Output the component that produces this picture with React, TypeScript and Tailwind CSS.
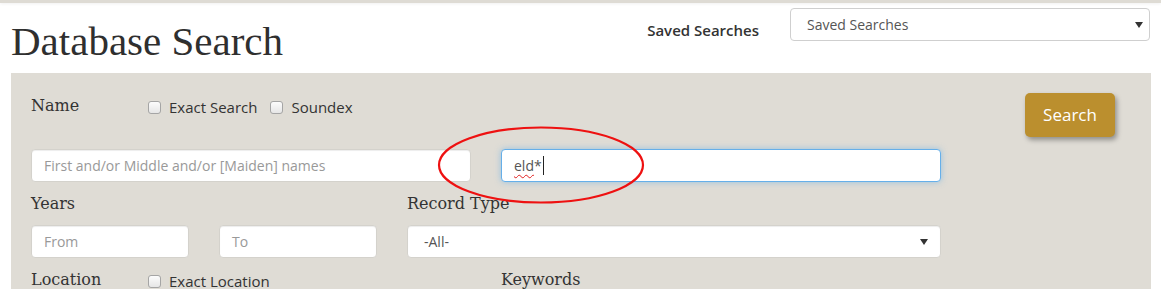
import type { ReactNode } from "react";

const sans = "font-['Open_Sans',sans-serif]";
const slab = "font-['DejaVu_Serif',serif]";

function Caret() {
  return (
    <svg width="8" height="6" viewBox="0 0 8 6" className="shrink-0" aria-hidden="true">
      <path d="M0 0h8L4 6z" fill="#333" />
    </svg>
  );
}

function Box({ label }: { label: string }) {
  return (
    <label className="flex items-center gap-[8px]">
      <span className="h-[13px] w-[13px] rounded-[3px] border border-[#a5a5a5] bg-gradient-to-b from-[#fcfcfc] to-[#e6e6e6]" />
      <span className={`${sans} text-[15px] text-[#333]`}>{label}</span>
    </label>
  );
}

function Field({ w, children, focus }: { w: string; children: ReactNode; focus?: boolean }) {
  return (
    <div
      className={`${w} flex h-[33px] items-center rounded-[4px] border bg-white px-[12px] ${sans} text-[14px] ${
        focus
          ? "border-[#66afe9] shadow-[0_0_6px_rgba(102,175,233,0.6)]"
          : "border-[#d4d2cc] shadow-[inset_0_1px_1px_rgba(0,0,0,0.075)]"
      }`}
    >
      {children}
    </div>
  );
}

function Label({ w, children }: { w?: string; children: ReactNode }) {
  return <div className={`${w ?? ""} ${slab} text-[16px] text-[#333]`}>{children}</div>;
}

export default function App() {
  return (
    <div className="relative h-[289px] w-[1161px] overflow-hidden bg-white">
      <div className="h-[3px] bg-[#dedbd4] shadow-[0_1px_3px_rgba(0,0,0,0.06)]" />

      <div className="flex h-[70px] items-start pl-[11px]">
        <h1 className="mt-[18px] font-['Liberation_Serif',serif] text-[41px] leading-[41px] text-[#2f2f2f]">
          Database Search
        </h1>
        <div className="ml-auto mr-[11px] mt-[5px] flex items-start gap-[31px]">
          <span className={`${sans} mt-[11px] text-[15px] font-semibold text-[#333]`}>Saved Searches</span>
          <div className={`flex h-[33px] w-[360px] items-center justify-between rounded-[4px] border border-[#cfcfcf] bg-white pl-[16px] pr-[6px] ${sans} text-[14px] text-[#555]`}>
            <span>Saved Searches</span>
            <Caret />
          </div>
        </div>
      </div>

      <div className="ml-[11px] flex h-[230px] w-[1140px] bg-[#dfdcd5] pl-[20px] pt-[17px]">
        <div className="w-[910px]">
          <div className="flex h-[32px] items-center">
            <Label w="w-[117px]">Name</Label>
            <div className="flex items-center gap-[13px] pt-[2px]">
              <Box label="Exact Search" />
              <Box label="Soundex" />
            </div>
          </div>

          <div className="mt-[27px] flex gap-[30px]">
            <Field w="w-[440px]">
              <span className="text-[#999]">First and/or Middle and/or [Maiden] names</span>
            </Field>
            <Field w="w-[440px]" focus>
              <span className="text-[#555]">
                <span className="underline decoration-[#e02020] decoration-wavy decoration-1 underline-offset-[3px]">eld</span>*
              </span>
              <span className="ml-[1px] h-[19px] w-px bg-[#222]" />
            </Field>
          </div>

          <div className="mt-[10px] flex h-[24px] items-center">
            <Label w="w-[376px]">Years</Label>
            <Label>Record Type</Label>
          </div>

          <div className="mt-[9px] flex gap-[30px]">
            <Field w="w-[158px]">
              <span className="text-[#999]">From</span>
            </Field>
            <Field w="w-[158px]">
              <span className="text-[#999]">To</span>
            </Field>
            <div className="flex w-[534px] items-center justify-between">
              <Field w="w-full">
                <span className="pl-[4px] text-[#555]">-All-</span>
                <span className="ml-auto">
                  <Caret />
                </span>
              </Field>
            </div>
          </div>

          <div className="mt-[10px] flex h-[24px] items-center">
            <Label w="w-[117px]">Location</Label>
            <div className="w-[353px] pt-[2px]">
              <Box label="Exact Location" />
            </div>
            <Label>Keywords</Label>
          </div>
        </div>

        <div className="ml-[84px] mt-[3px]">
          <button
            type="button"
            className={`h-[44px] w-[90px] rounded-[5px] bg-[#bb8f2e] ${sans} text-[17px] text-white shadow-[2px_3px_5px_rgba(0,0,0,0.35)]`}
          >
            Search
          </button>
        </div>
      </div>

      <svg
        className="pointer-events-none absolute left-[437px] top-[125px]"
        width="208"
        height="80"
        viewBox="0 0 208 80"
        aria-hidden="true"
      >
        <ellipse cx="104" cy="40" rx="102" ry="37.5" fill="none" stroke="#ee1111" strokeWidth="2.2" />
      </svg>
    </div>
  );
}
